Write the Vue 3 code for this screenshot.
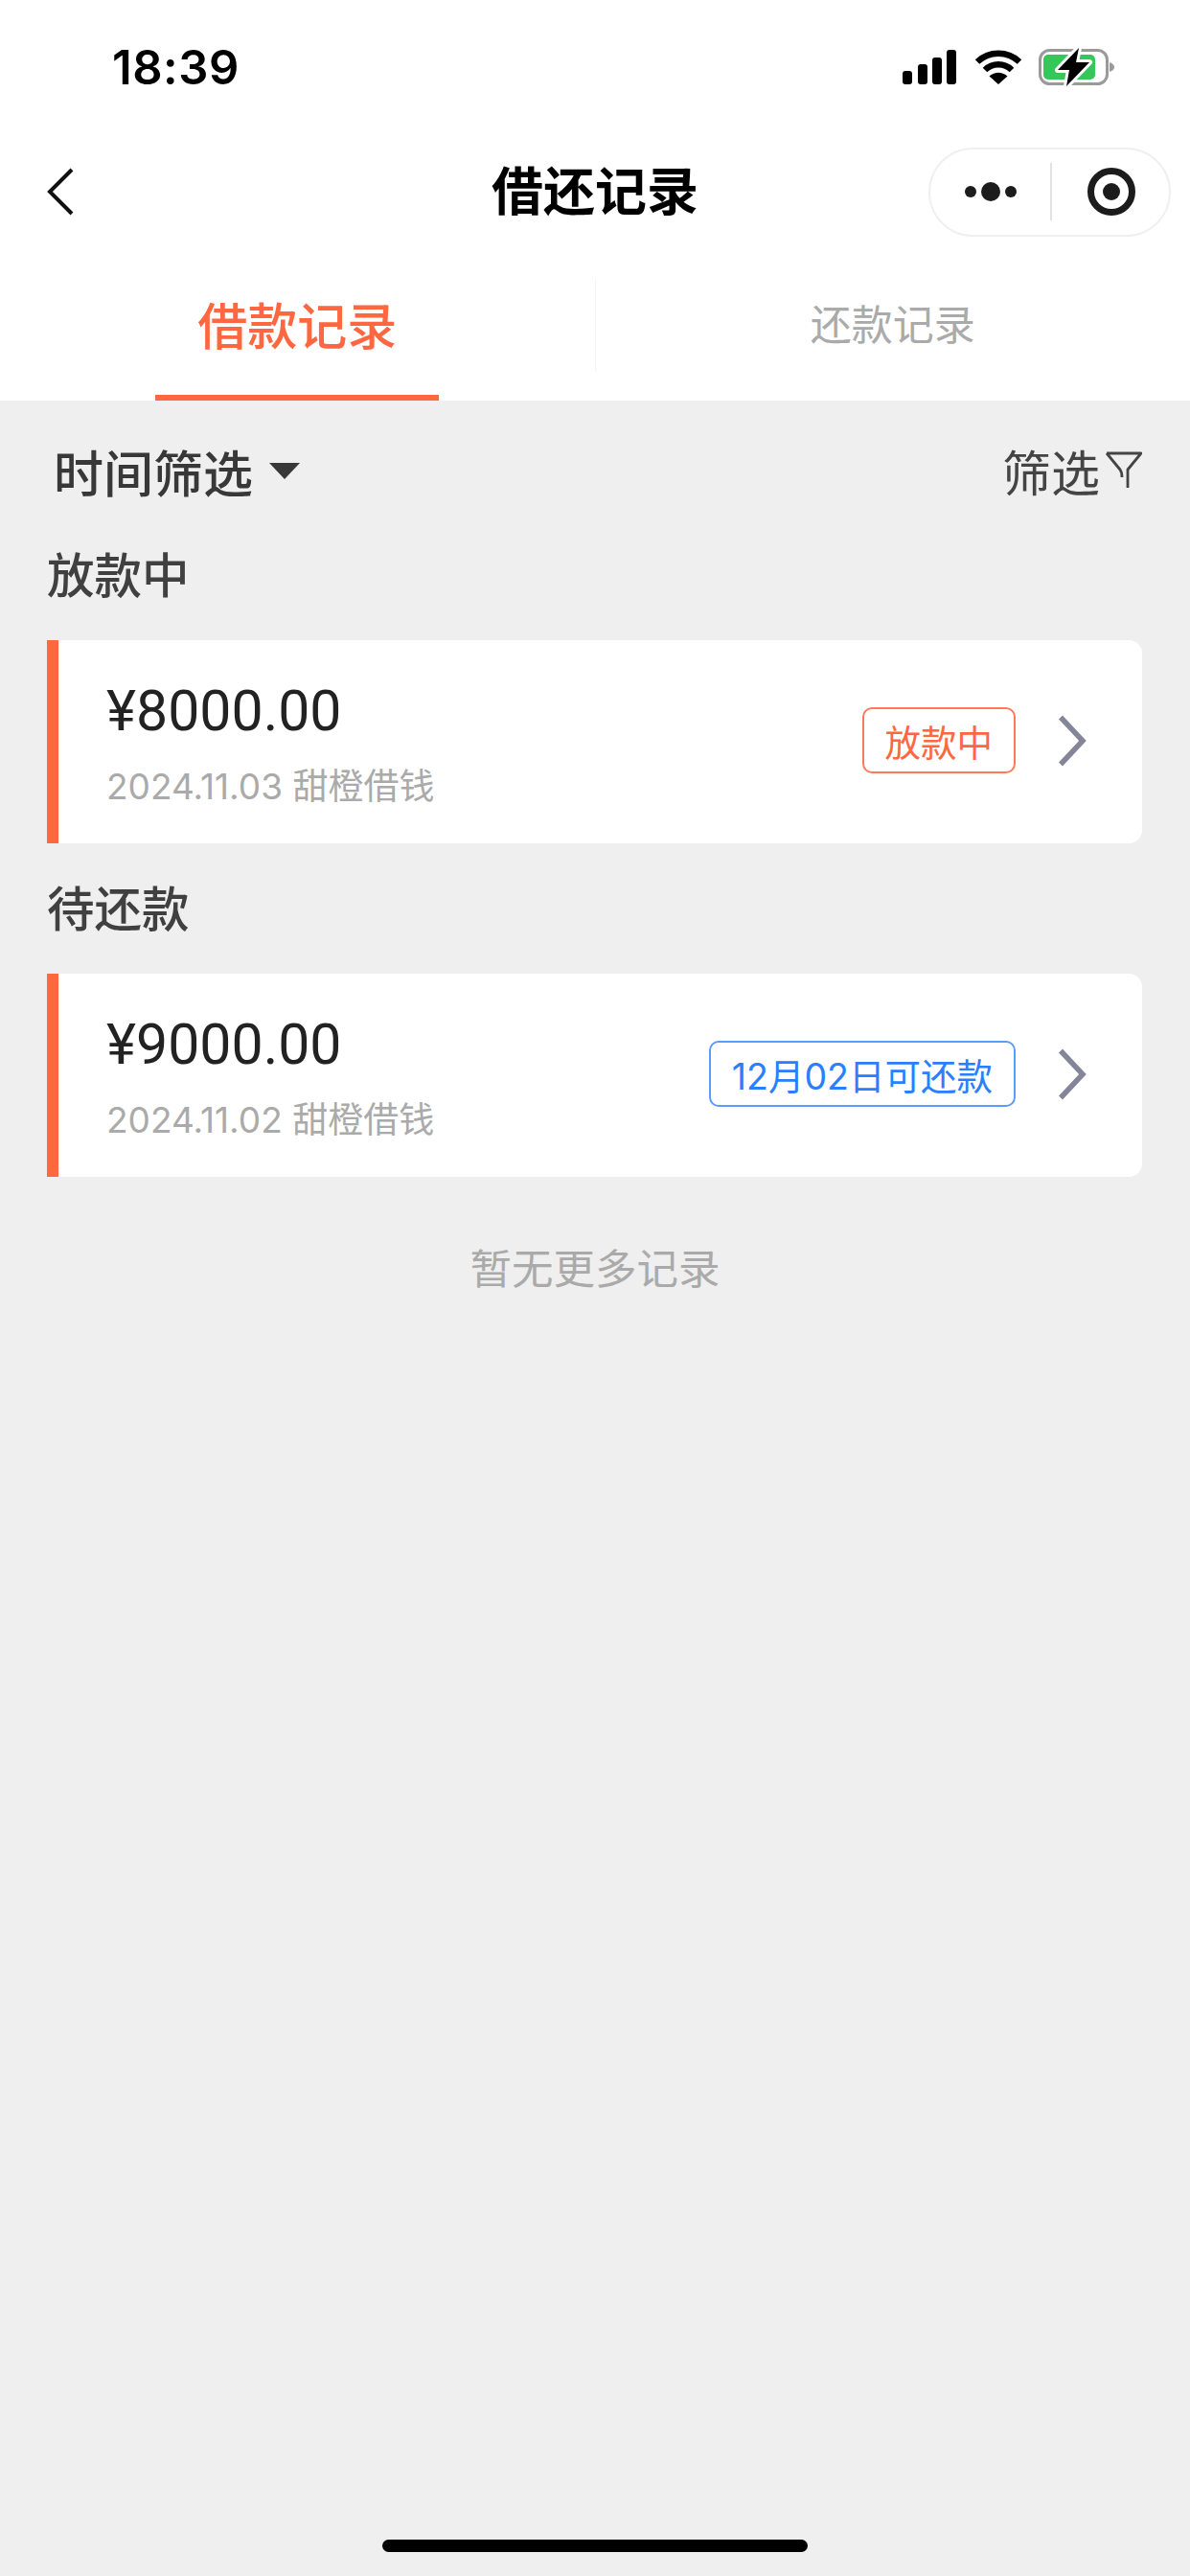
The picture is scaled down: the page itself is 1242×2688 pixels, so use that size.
<template>
  <div class="page">
    <div class="status">
      <span class="time">18:39</span>
      <div class="status-icons">
        <svg class="signal" viewBox="0 0 56 36" width="56" height="36">
          <rect x="0" y="22" width="10" height="14" rx="3" />
          <rect x="16" y="15" width="10" height="21" rx="3" />
          <rect x="31" y="8" width="10" height="28" rx="3" />
          <rect x="46" y="0" width="10" height="36" rx="3" />
        </svg>
        <svg class="wifi" viewBox="0 0 50 36" width="50" height="36">
          <path d="M3 12.5 A32 32 0 0 1 47 12.5" fill="none" stroke="#000" stroke-width="6.5" />
          <path d="M11 21 A20 20 0 0 1 39 21" fill="none" stroke="#000" stroke-width="6.5" />
          <path d="M25 36 L15.5 27.5 Q25 20 34.5 27.5 Z" fill="#000" />
        </svg>
        <svg class="battery" viewBox="0 0 80 42" width="80" height="42">
          <rect x="1.500" y="3.500" width="70" height="35" rx="10" fill="#fff" stroke="#9a9a9a" stroke-width="3" />
          <rect x="5" y="8" width="54" height="26" rx="5" fill="#34c759" />
          <path d="M74 16 C77.500 17 79 19 79 21 C79 23 77.500 25 74 26 Z" fill="#9a9a9a" />
          <path d="M42 1 L20 24 L32 24 L29 41 L53 16 L39 16 Z" fill="#000" stroke="#fff" stroke-width="6" paint-order="stroke" stroke-linejoin="round" />
        </svg>
      </div>
    </div>

    <div class="nav">
      <svg class="back" viewBox="0 0 28 50" width="28" height="50">
        <path d="M26 2 L3 25 L26 48" fill="none" stroke="#111" stroke-width="4" />
      </svg>
      <span class="nav-title">借还记录</span>
      <div class="capsule">
        <div class="capsule-dots">
          <i class="dot"></i>
          <i class="dot dot-big"></i>
          <i class="dot"></i>
        </div>
        <i class="capsule-line"></i>
        <div class="capsule-ring"><i></i></div>
      </div>
    </div>

    <div class="tabs">
      <div class="tab tab-active">
        <span class="tab-label">借款记录</span>
        <i class="tab-bar"></i>
      </div>
      <i class="tab-line"></i>
      <div class="tab">
        <span class="tab-label">还款记录</span>
      </div>
    </div>

    <div class="filters">
      <div class="time-filter">
        <span>时间筛选</span>
        <i class="caret"></i>
      </div>
      <div class="filter-btn">
        <span>筛选</span>
        <svg viewBox="0 0 38 40" width="38" height="40">
          <path d="M1 2 H37 L23 19 V38 M1 2 L15 19 C16.500 21 17 23 17 27" fill="none" stroke="#444" stroke-width="2.800" stroke-linejoin="round" />
        </svg>
      </div>
    </div>

    <section v-for="group in groups" :key="group.title">
      <h2 class="group-title">{{ group.title }}</h2>
      <div class="card">
        <div class="card-info">
          <div class="amount">{{ group.amount }}</div>
          <div class="meta">{{ group.meta }}</div>
        </div>
        <div class="card-side">
          <span class="tag" :class="group.tagClass">{{ group.tag }}</span>
          <svg viewBox="0 0 30 54" width="30" height="54">
            <path d="M3 2.500 L26 27 L3 51.500" fill="none" stroke="#85859a" stroke-width="5.500" />
          </svg>
        </div>
      </div>
    </section>

    <p class="no-more">暂无更多记录</p>

    <div class="home-bar"></div>
  </div>
</template>

<script setup>
const groups = [
  {
    title: '放款中',
    amount: '¥8000.00',
    meta: '2024.11.03 甜橙借钱',
    tag: '放款中',
    tagClass: 'tag-orange'
  },
  {
    title: '待还款',
    amount: '¥9000.00',
    meta: '2024.11.02 甜橙借钱',
    tag: '12月02日可还款',
    tagClass: 'tag-blue'
  }
]
</script>

<style>
body {
  margin: 0;
}
</style>

<style scoped>
.page {
  width: 1242px;
  height: 2688px;
  background: #efefef;
  display: flex;
  flex-direction: column;
  font-family: Inter, "Noto Sans CJK SC", sans-serif;
  overflow: hidden;
}

.status {
  height: 140px;
  background: #fff;
  display: flex;
  align-items: center;
  justify-content: space-between;
  padding: 0 78px 0 117px;
  box-sizing: border-box;
}

.time {
  font-size: 49px;
  font-weight: 600;
  color: #000;
  letter-spacing: 0.5px;
  margin-top: 1px;
}

.status-icons {
  display: flex;
  align-items: center;
  gap: 19px;
}

.wifi {
  margin-right: -2px;
}

.signal {
  fill: #000;
}

.nav {
  height: 120px;
  background: #fff;
  display: flex;
  align-items: center;
  justify-content: space-between;
  padding: 0 20px 0 49px;
  box-sizing: border-box;
  position: relative;
}

.nav-title {
  position: absolute;
  left: 0;
  right: 0;
  top: 25px;
  text-align: center;
  font-size: 54px;
  line-height: 72px;
  font-weight: 700;
  color: #000;
}

.capsule {
  width: 253px;
  height: 93px;
  border: 2px solid #f0f0f0;
  border-radius: 47px;
  box-sizing: border-box;
  display: flex;
  align-items: center;
}

.capsule-dots {
  width: 125px;
  display: flex;
  align-items: center;
  justify-content: center;
  gap: 5px;
}

.dot {
  width: 12px;
  height: 12px;
  border-radius: 50%;
  background: #1c1c1c;
}

.dot-big {
  width: 20px;
  height: 20px;
}

.capsule-line {
  width: 2px;
  height: 60px;
  background: #e2e2e2;
}

.capsule-ring {
  width: 50px;
  height: 50px;
  margin-left: 37px;
  border: 7px solid #1c1c1c;
  border-radius: 50%;
  box-sizing: border-box;
  display: flex;
  align-items: center;
  justify-content: center;
}

.capsule-ring i {
  width: 18px;
  height: 18px;
  border-radius: 50%;
  background: #1c1c1c;
}

.tabs {
  height: 158px;
  background: #fff;
  display: flex;
}

.tab {
  flex: 1;
  display: flex;
  flex-direction: column;
  align-items: center;
}

.tab-label {
  flex: 1;
  display: flex;
  align-items: center;
  padding-bottom: 6px;
  font-size: 43px;
  color: #aaa;
}

.tab-active .tab-label {
  padding-bottom: 0;
  padding-top: 2px;
  font-size: 52px;
  font-weight: 500;
  color: #ff6740;
}

.tab-bar {
  width: 296px;
  height: 6px;
  background: #ff6740;
}

.tab-line {
  width: 1px;
  height: 98px;
  margin-top: 30px;
  background: #f4f4f4;
}

.filters {
  height: 114px;
  padding: 32px 50px 0 56px;
  box-sizing: border-box;
  display: flex;
  align-items: center;
  justify-content: space-between;
}

.time-filter {
  display: flex;
  align-items: center;
  gap: 17px;
  font-size: 52px;
  font-weight: 500;
  color: #383838;
}

.caret {
  width: 0;
  height: 0;
  border-left: 16px solid transparent;
  border-right: 16px solid transparent;
  border-top: 17px solid #383838;
}

.filter-btn {
  display: flex;
  align-items: center;
  gap: 6px;
  font-size: 51px;
  color: #444;
}

.group-title {
  height: 136px;
  margin: 0;
  padding-left: 49px;
  font-size: 49.5px;
  font-weight: 500;
  line-height: 138px;
  color: #404040;
}

.card {
  height: 212px;
  margin: 0 50px 0 49px;
  padding: 3px 58px 0 50px;
  background: #fff;
  border-left: 12px solid #ff6740;
  border-radius: 0 14px 14px 0;
  box-sizing: border-box;
  display: flex;
  align-items: center;
  justify-content: space-between;
}

.amount {
  font-family: Roboto, sans-serif;
  font-size: 59px;
  line-height: 72px;
  color: #222;
}

.meta {
  margin-top: 18px;
  font-size: 37px;
  line-height: 50px;
  color: #aaa;
}

.card-side {
  display: flex;
  align-items: center;
  gap: 44px;
  margin-bottom: 6px;
}

.tag {
  height: 69px;
  padding: 0 22px;
  border: 2px solid;
  border-radius: 10px;
  box-sizing: border-box;
  display: flex;
  align-items: center;
  font-size: 37.5px;
}

.tag-orange {
  color: #ff6740;
  border-color: #ff7a58;
}

.tag-blue {
  color: #2b7fff;
  border-color: #5a9bff;
}

.no-more {
  margin: 66px 0 0;
  text-align: center;
  font-size: 43.5px;
  line-height: 60px;
  color: #aaa;
}

.home-bar {
  width: 444px;
  height: 13px;
  margin: auto auto 25px;
  border-radius: 7px;
  background: #000;
}
</style>
